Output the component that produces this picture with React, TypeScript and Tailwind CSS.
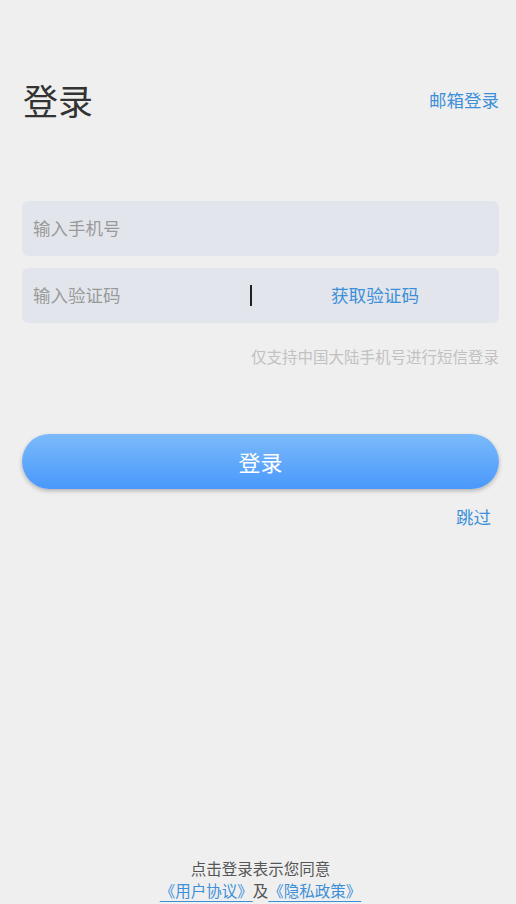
import React from 'react';

const font = { fontFamily: '"Noto Sans CJK SC", "Noto Sans", sans-serif' };

export default function App() {
    return (
        <div className="min-h-screen bg-[#efefef] flex flex-col pl-[22px] pr-[17px]" style={font}>
            {/* header */}
            <div className="flex items-center justify-between pt-[76px]">
                <h1 className="text-[35px] leading-[48px] text-[#333] pl-[1px]">登录</h1>
                <button className="text-[17.5px] leading-[24px] text-[#3c8fd8]">邮箱登录</button>
            </div>

            {/* inputs */}
            <div className="mt-[77px] flex flex-col gap-[12px]">
                <div className="h-[55px] rounded-[6px] bg-[#e2e6ec] flex items-center px-[11px]">
                    <span className="text-[17.5px] text-[#9a9a9a]">输入手机号</span>
                </div>
                <div className="h-[55px] rounded-[6px] bg-[#e2e6ec] flex items-center px-[11px]">
                    <span className="text-[17.5px] text-[#9a9a9a] w-[217px]">输入验证码</span>
                    <span className="w-[2px] h-[21px] bg-[#222]" />
                    <button className="flex-1 text-center text-[17.6px] text-[#3c8fd8] pl-[10px]">获取验证码</button>
                </div>
            </div>
            <p className="mt-[22px] text-right text-[15.5px] leading-[22px] text-[#c2c2c2]">仅支持中国大陆手机号进行短信登录</p>

            {/* login button */}
            <button className="mt-[67px] h-[55px] rounded-full bg-gradient-to-b from-[#7cbafb] to-[#4898fb] shadow-[0_2px_4px_rgba(0,0,0,0.25)] text-white text-[22px]">
                登录
            </button>
            <div className="flex justify-end mt-[16px] pr-[8px]">
                <button className="text-[17.5px] leading-[24px] text-[#3c8fd8]">跳过</button>
            </div>

            {/* footer */}
            <div className="mt-auto pb-[3px] flex flex-col items-center text-[15.5px] leading-[21px] text-[#555]">
                <p>点击登录表示您同意</p>
                <p className="leading-[22px]">
                    <a className="text-[#3c8fd8] underline decoration-[#3c8fd8] underline-offset-[4px]">《用户协议》</a>
                    <span>及</span>
                    <a className="text-[#3c8fd8] underline decoration-[#3c8fd8] underline-offset-[4px]">《隐私政策》</a>
                </p>
            </div>
        </div>
    );
}
